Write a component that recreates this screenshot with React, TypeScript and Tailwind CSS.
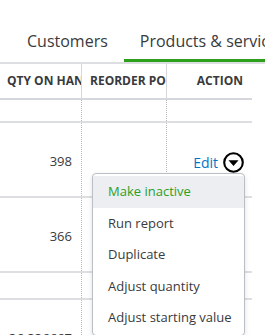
function CaretCircle() {
  return (
    <svg width="21" height="21" viewBox="0 0 21 21" className="shrink-0">
      <circle cx="10.5" cy="10.5" r="9.3" fill="none" stroke="#000" strokeWidth="2.1" />
      <path d="M5.5 8.3 L15.5 8.3 L10.5 13.9 Z" fill="#000" />
    </svg>
  );
}

type Row = { qty: string };

const rows: Row[] = [{ qty: "398" }, { qty: "366" }];

function DataRow({ qty }: Row) {
  return (
    <div className="flex h-[75px] w-[252px] border-b-2 border-[#dcdee2]">
      <div className="flex h-full w-[82px] items-start justify-end border-r border-dotted border-[#b8bbc0] pr-[9px] pt-[28px]">
        <span className="flex h-[21px] items-center text-[13px] text-[#393a3d]">{qty}</span>
      </div>
      <div className="h-full w-[85px] border-r border-dotted border-[#b8bbc0]" />
      <div className="flex h-full flex-1 items-start justify-end gap-[5px] pr-[8px] pt-[29px]">
        <span className="flex h-[21px] items-center text-[14px] text-[#0077c5]">Edit</span>
        <CaretCircle />
      </div>
    </div>
  );
}

function EmptyRow({ tall }: { tall?: boolean }) {
  return (
    <div className={tall ? "flex h-[27px] w-[252px] border-b-2 border-[#dcdee2]" : "flex h-[23px] w-[252px] border-b-2 border-[#dcdee2]"}>
      <div className="h-full w-[82px] border-r border-dotted border-[#b8bbc0]" />
      <div className="h-full w-[85px] border-r border-dotted border-[#b8bbc0]" />
      <div className="h-full flex-1" />
    </div>
  );
}

const menuItems = ["Make inactive", "Run report", "Duplicate", "Adjust quantity", "Adjust starting value"];

export default function App() {
  return (
    <div
      className="relative h-[335px] w-[265px] overflow-hidden bg-white"
      style={{ fontFamily: '"Open Sans", "Liberation Sans", sans-serif' }}
    >
      {/* tabs */}
      <div className="flex h-[64px] border-b-2 border-[#dcdee2] pl-[11px]">
        <div className="h-[62px] border-b-[3px] border-transparent px-[16px] pt-[30px] text-[16px] leading-[22px] text-[#393a3d]">
          Customers
        </div>
        <div className="h-[62px] flex-1 whitespace-nowrap border-b-[3px] border-[#2ca01c] pl-[16px] pt-[30px] text-[16px] leading-[22px] text-[#393a3d]">
          Products &amp; services
        </div>
      </div>

      {/* header */}
      <div className="flex h-[36px] w-[252px] border-b-2 border-[#d4d7dc] text-[12px] font-bold text-[#393a3d]">
        <div className="flex h-full w-[82px] items-center overflow-hidden whitespace-nowrap border-r border-[#d4d7dc] pl-[7px]">
          QTY ON HAND
        </div>
        <div className="flex h-full w-[85px] items-center overflow-hidden whitespace-nowrap border-r border-[#d4d7dc] pl-[8px]">
          REORDER POINT
        </div>
        <div className="flex h-full flex-1 items-center justify-end pr-[9px]">ACTION</div>
      </div>

      <EmptyRow />
      {rows.map((r) => (
        <DataRow key={r.qty} qty={r.qty} />
      ))}
      <EmptyRow tall />
      <DataRow qty="36.336667" />

      {/* dropdown menu */}
      <div className="absolute left-[92px] top-[173px] w-[153px] rounded-[4px] border border-[#babec5] bg-white pt-[2px] pb-[1px] shadow-[0_2px_5px_rgba(0,0,0,0.12)]">
        {menuItems.map((item, i) => (
          <div
            key={item}
            className={
              i === 0
                ? "flex h-[31.5px] items-center bg-[#eceef1] pl-[15px] text-[13px] text-[#2ca01c]"
                : "flex h-[31.5px] items-center pl-[15px] text-[13px] text-[#393a3d]"
            }
          >
            {item}
          </div>
        ))}
      </div>
    </div>
  );
}
